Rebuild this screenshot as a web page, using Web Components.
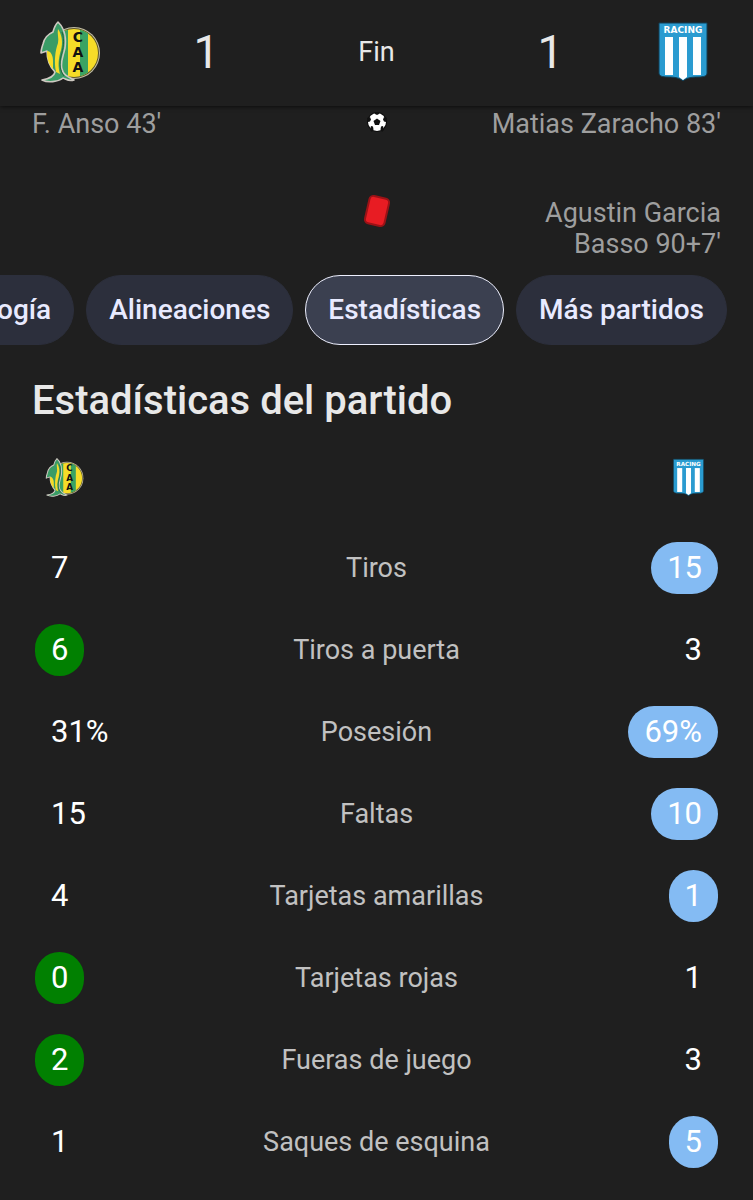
<!DOCTYPE html>
<html lang="es">
<head>
<meta charset="utf-8">
<meta name="viewport" content="width=device-width, initial-scale=1">
<title>Estadísticas del partido</title>
<style>
  body {
    margin: 0;
    min-height: 100vh;
    background: #1f1f1f;
    color: #e8e8e8;
    font-family: Roboto, "Liberation Sans", sans-serif;
    --home-color: #018001;
    --away-color: #84bbf3;
  }
</style>
</head>
<body>
  <score-header>
    <team-crest slot="home-crest" team="aldosivi" size="62"></team-crest>
    <span slot="home-score">1</span>
    <span slot="status">Fin</span>
    <span slot="away-score">1</span>
    <team-crest slot="away-crest" team="racing" size="62"></team-crest>
  </score-header>

  <main>
    <match-event type="goal">
      <span slot="home">F. Anso 43'</span>
      <span slot="away">Matias Zaracho 83'</span>
    </match-event>
    <match-event type="red-card">
      <span slot="away">Agustin Garcia Basso 90+7'</span>
    </match-event>

    <chip-bar>
      <nav-chip>Cronología</nav-chip>
      <nav-chip>Alineaciones</nav-chip>
      <nav-chip active>Estadísticas</nav-chip>
      <nav-chip>Más partidos</nav-chip>
    </chip-bar>

    <match-stats heading="Estadísticas del partido"></match-stats>
  </main>

<script>
// Build a template once per element
function makeTemplate(html) {
  const template = document.createElement('template');
  template.innerHTML = html;
  return template;
}

const CRESTS = {
  aldosivi: `
    <svg viewBox="0 0 62 62" role="img" aria-label="Aldosivi">
      <defs>
        <clipPath id="disc"><circle cx="35" cy="32" r="24"/></clipPath>
      </defs>
      <circle cx="35" cy="32" r="26" fill="#c2bda6"/>
      <circle cx="35" cy="32" r="25" fill="#5c5526"/>
      <g clip-path="url(#disc)">
        <rect width="62" height="62" fill="#f6dc28"/>
        <rect x="22" width="7" height="62" fill="#3aa363"/>
        <rect x="41" width="8" height="62" fill="#3aa363"/>
      </g>
      <path d="M19 1C16 4 15 7 14 11C9 13 5 18 4 23C3 26 2 29 2 32L8 30C8 37 10 45 16 51C15 56 9 58 3 59C9 62 19 61 24 57C27 58 30 61 35 59C29 56 24 54 23 48C21 42 24 36 26 27C27 19 26 12 24 8C23 5 21 3 19 1Z"
        fill="#3a9c66" stroke="#cfc9c2" stroke-width="1.600" stroke-linejoin="round"/>
      <path d="M19 8C23 14 24 21 22 29C19 39 19 46 21 53L17 51C15 41 16 30 19 22C20 17 18 13 19 8Z" fill="#f6dc28"/>
      <path d="M23 11C26 20 24 28 22 35C20 43 21 50 25 55" fill="none" stroke="#24613d"/>
      <path d="M8 30C12 30 14 35 14 40V48C9 43 8 37 8 30Z" fill="#f6dc28"/>
      <g fill="#111" font-family="DejaVu Sans, sans-serif" font-weight="700" font-size="14" text-anchor="middle">
        <text x="39" y="21">C</text>
        <text x="39" y="36">A</text>
        <text x="39" y="51">A</text>
      </g>
    </svg>`,
  racing: `
    <svg viewBox="0 0 62 62" role="img" aria-label="Racing Club">
      <path d="M7 2H55V52C55 55 52 56 46 56C39 56 34 57 31 60C28 57 23 56 16 56C10 56 7 55 7 52Z" fill="#2a9bd0" stroke="#123f55"/>
      <g fill="#fff">
        <path d="M13 16H21V54H13Z"/>
        <path d="M27 16H35V56L31 59L27 56Z"/>
        <path d="M41 16H49V54H41Z"/>
      </g>
      <text x="31" y="12" fill="#fff" font-family="DejaVu Sans, sans-serif" font-weight="700" font-size="9" text-anchor="middle">RACING</text>
    </svg>`
};

const EVENT_ICONS = {
  goal: `
    <svg viewBox="0 0 24 24" width="24" height="24" role="img" aria-label="Gol">
      <circle cx="12" cy="12" r="10" fill="#0c0c0c"/>
      <circle cx="12" cy="12" r="9" fill="#fff"/>
      <g fill="#111">
        <path d="M12 8.500L15.500 11L14 15H10L8.500 11Z"/>
        <path d="M9 2H15L14 4L12 5L10 4Z"/>
        <path d="M22 8L21 12L19 11.500L18 9.500L19 7Z"/>
        <path d="M2 8L3 12L5 11.500L6 9.500L5 7Z"/>
        <path d="M5 20L6 16L8 16.500L8.500 19.500L7 22Z"/>
        <path d="M19 20L18 16L16 16.500L15.500 19.500L17 22Z"/>
      </g>
    </svg>`,
  'red-card': `
    <svg viewBox="0 0 32 36" width="32" height="36" role="img" aria-label="Tarjeta roja">
      <rect x="6" y="4" width="20" height="28" rx="4" transform="rotate(13 16 18)" fill="#e81c23" stroke="#9b1216" stroke-width="2"/>
    </svg>`
};

class TeamCrest extends HTMLElement {
  constructor() {
    super();
    this.attachShadow({ mode: 'open' });
  }

  connectedCallback() {
    const size = this.getAttribute('size') || '40';
    this.shadowRoot.innerHTML = `
      <style>
        :host { display: inline-block; width: ${size}px; height: ${size}px; }
        svg { display: block; width: 100%; height: 100%; }
      </style>
      ${CRESTS[this.getAttribute('team')]}
    `;
  }
}
customElements.define('team-crest', TeamCrest);

const headerTemplate = makeTemplate(`
  <style>
    :host {
      display: block;
      position: sticky;
      top: 0;
      z-index: 1;
      background: #1f1f1f;
      box-shadow: 0 1px 4px rgba(0, 0, 0, 0.6);
    }
    header {
      display: grid;
      grid-template-columns: 140px 3fr 5fr 3fr 140px;
      align-items: center;
      justify-items: center;
      height: 103px;
      padding-bottom: 3px;
    }
    .score { padding-left: 4px; font-size: 46px; }
    .status { font-size: 27px; }
  </style>
  <header>
    <slot name="home-crest"></slot>
    <div class="score"><slot name="home-score"></slot></div>
    <div class="status"><slot name="status"></slot></div>
    <div class="score"><slot name="away-score"></slot></div>
    <slot name="away-crest"></slot>
  </header>
`);

class ScoreHeader extends HTMLElement {
  constructor() {
    super();
    this.attachShadow({ mode: 'open' });
    this.shadowRoot.appendChild(headerTemplate.content.cloneNode(true));
  }
}
customElements.define('score-header', ScoreHeader);

class MatchEvent extends HTMLElement {
  constructor() {
    super();
    this.attachShadow({ mode: 'open' });
  }

  connectedCallback() {
    this.shadowRoot.innerHTML = `
      <style>
        :host {
          display: grid;
          grid-template-columns: 1fr 32px 1fr;
          column-gap: 88px;
          padding: 3px 32px 0;
          color: #9e9e9e;
          font-size: 27px;
          line-height: 31px;
        }
        :host([type="red-card"]) { padding-top: 58px; }
        .icon { display: flex; height: 26px; align-items: center; justify-content: center; }
        .icon svg { flex: none; }
        .away { text-align: right; }
      </style>
      <div><slot name="home"></slot></div>
      <div class="icon">${EVENT_ICONS[this.getAttribute('type')]}</div>
      <div class="away"><slot name="away"></slot></div>
    `;
  }
}
customElements.define('match-event', MatchEvent);

// The row is scrolled to its end, so it overflows on the left
const barTemplate = makeTemplate(`
  <style>
    :host { display: block; overflow: hidden; }
    nav {
      display: flex;
      justify-content: flex-end;
      gap: 12px;
      padding: 15px 26px 0 0;
    }
  </style>
  <nav><slot></slot></nav>
`);

class ChipBar extends HTMLElement {
  constructor() {
    super();
    this.attachShadow({ mode: 'open' });
    this.shadowRoot.appendChild(barTemplate.content.cloneNode(true));
  }
}
customElements.define('chip-bar', ChipBar);

const chipTemplate = makeTemplate(`
  <style>
    :host { display: block; flex: none; }
    button {
      display: block;
      height: 70px;
      padding: 0 22px 2px;
      border: 1px solid #2c2f3c;
      border-radius: 35px;
      background: #2c2f3c;
      color: #e8eaff;
      font-family: inherit;
      font-size: 28px;
      font-weight: 500;
      white-space: nowrap;
    }
    :host([active]) button { background: #3b4050; border-color: #eef0ff; }
  </style>
  <button type="button"><slot></slot></button>
`);

class NavChip extends HTMLElement {
  constructor() {
    super();
    this.attachShadow({ mode: 'open' });
    this.shadowRoot.appendChild(chipTemplate.content.cloneNode(true));
  }
}
customElements.define('nav-chip', NavChip);

const pillTemplate = makeTemplate(`
  <style>
    :host {
      display: inline-block;
      box-sizing: border-box;
      padding: 0 16px;
      border-radius: 26px;
      color: #fff;
      font-size: 31px;
      line-height: 52px;
    }
    :host([lead="home"]) { background: var(--home-color); }
    :host([lead="away"]) { background: var(--away-color); }
  </style>
  <slot></slot>
`);

class StatPill extends HTMLElement {
  constructor() {
    super();
    this.attachShadow({ mode: 'open' });
    this.shadowRoot.appendChild(pillTemplate.content.cloneNode(true));
  }
}
customElements.define('stat-pill', StatPill);

// [home, label, away, leader]
const STATS = [
  ['7', 'Tiros', '15', 'away'],
  ['6', 'Tiros a puerta', '3', 'home'],
  ['31%', 'Posesión', '69%', 'away'],
  ['15', 'Faltas', '10', 'away'],
  ['4', 'Tarjetas amarillas', '1', 'away'],
  ['0', 'Tarjetas rojas', '1', 'home'],
  ['2', 'Fueras de juego', '3', 'home'],
  ['1', 'Saques de esquina', '5', 'away']
];

class MatchStats extends HTMLElement {
  constructor() {
    super();
    this.attachShadow({ mode: 'open' });
  }

  connectedCallback() {
    const rows = STATS.map(([home, label, away, leader]) => `
      <tr>
        <td><stat-pill ${leader === 'home' ? 'lead="home"' : ''}>${home}</stat-pill></td>
        <th scope="row">${label}</th>
        <td><stat-pill ${leader === 'away' ? 'lead="away"' : ''}>${away}</stat-pill></td>
      </tr>
    `).join('');

    this.shadowRoot.innerHTML = `
      <style>
        :host { display: block; padding: 32px 35px 0; }
        h2 {
          margin: 0 -3px;
          font-size: 40px;
          font-weight: 500;
          line-height: 48px;
        }
        table { width: 100%; border-collapse: collapse; table-layout: fixed; }
        td, th { height: 82px; padding: 0; vertical-align: middle; }
        thead td { height: 99px; padding: 3px 10px 0; }
        td:first-child { width: 25%; text-align: left; }
        td:last-child { width: 25%; text-align: right; }
        th { color: #c1c1c1; font-size: 27px; font-weight: 400; text-align: center; }
        team-crest, stat-pill { vertical-align: middle; }
      </style>
      <h2>${this.getAttribute('heading')}</h2>
      <table>
        <thead>
          <tr>
            <td><team-crest team="aldosivi" size="39"></team-crest></td>
            <td></td>
            <td><team-crest team="racing" size="39"></team-crest></td>
          </tr>
        </thead>
        <tbody>${rows}</tbody>
      </table>
    `;
  }
}
customElements.define('match-stats', MatchStats);
</script>
</body>
</html>
